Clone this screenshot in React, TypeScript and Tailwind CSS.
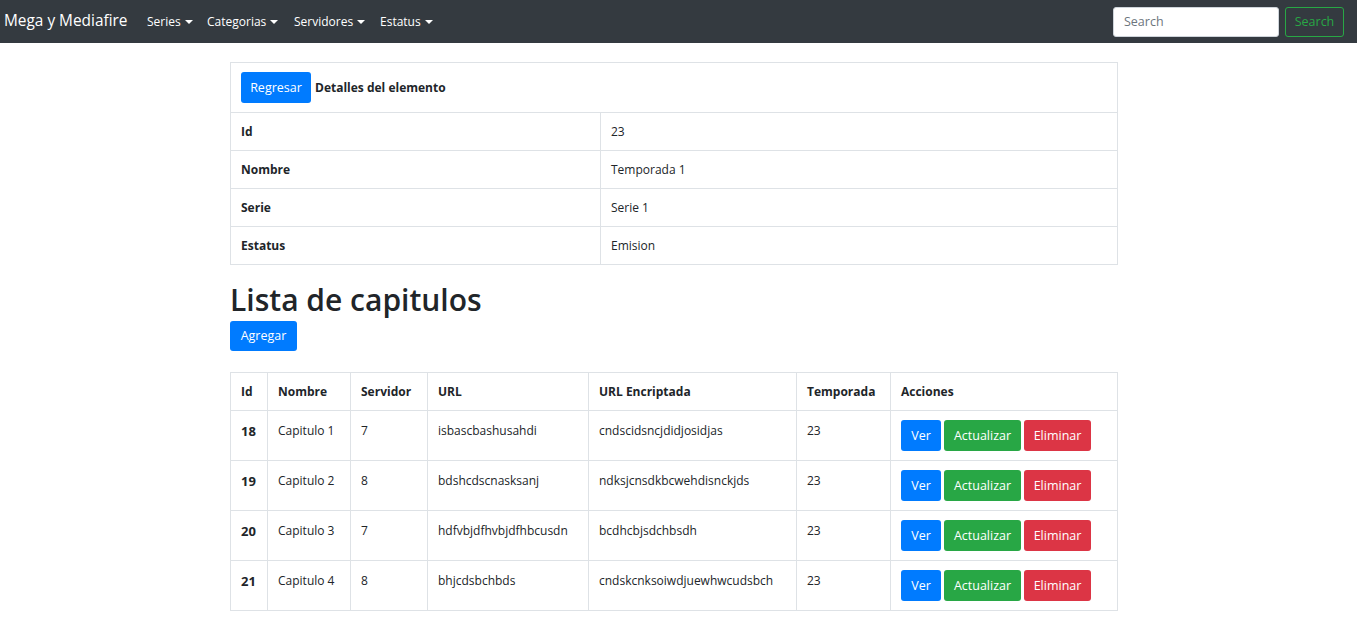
import React from "react";

const Caret = () => (
  <span className="ml-[4px] inline-block h-0 w-0 border-x-[4px] border-t-[4px] border-x-transparent border-t-white align-[2px]" />
);

const rows = [
  { id: 18, nombre: "Capitulo 1", serv: 7, url: "isbascbashusahdi", enc: "cndscidsncjdidjosidjas", temp: 23 },
  { id: 19, nombre: "Capitulo 2", serv: 8, url: "bdshcdscnasksanj", enc: "ndksjcnsdkbcwehdisnckjds", temp: 23 },
  { id: 20, nombre: "Capitulo 3", serv: 7, url: "hdfvbjdfhvbjdfhbcusdn", enc: "bcdhcbjsdchbsdh", temp: 23 },
  { id: 21, nombre: "Capitulo 4", serv: 8, url: "bhjcdsbchbds", enc: "cndskcnksoiwdjuewhwcudsbch", temp: 23 },
];

export default function App() {
  const font = { fontFamily: '"Segoe UI", "Open Sans", "Noto Sans", sans-serif' };
  return (
    <div className="min-h-[630px] bg-white text-[12px] leading-[1.6] text-[#212529]" style={font}>
      <nav className="flex h-[43px] items-center justify-between bg-[#343a40] pl-[4px] pr-[13px]">
        <div className="flex items-center">
          <span className="w-[143px] text-[15.4px] text-white">Mega y Mediafire</span>
          <div className="flex items-center text-white">
            <span className="w-[60px]">Series<Caret /></span>
            <span className="w-[87px]">Categorias<Caret /></span>
            <span className="w-[86px]">Servidores<Caret /></span>
            <span>Estatus<Caret /></span>
          </div>
        </div>
        <div className="flex items-center gap-[6px]">
          <div className="flex h-[30px] w-[166px] items-center rounded-[3px] border border-[#ced4da] bg-white px-[10px] text-[12.5px] text-[#6c757d]">Search</div>
          <div className="flex h-[30px] w-[59px] items-center justify-center rounded-[3px] border border-[#28a745] text-[12.5px] text-[#28a745]">Search</div>
        </div>
      </nav>

      <div className="ml-[230px] w-[888px] pt-[19px]">
        <table className="w-full border border-[#dee2e6]">
          <tbody>
            <tr className="h-[50px] border-b border-[#dee2e6]">
              <td colSpan={2} className="px-[10px]">
                <div className="flex items-center">
                  <span className="inline-flex h-[31px] w-[70px] items-center justify-center rounded-[3px] bg-[#007bff] text-[12.5px] text-white">Regresar</span>
                  <span className="ml-[4px] font-bold">Detalles del elemento</span>
                </div>
              </td>
            </tr>
            {[["Id", "23"], ["Nombre", "Temporada 1"], ["Serie", "Serie 1"], ["Estatus", "Emision"]].map(([k, v]) => (
              <tr key={k} className="h-[38px] border-b border-[#dee2e6]">
                <td className="w-[370px] border-r border-[#dee2e6] px-[10px] font-bold">{k}</td>
                <td className="px-[10px]">{v}</td>
              </tr>
            ))}
          </tbody>
        </table>

        <h1 className="mt-[16px] h-[37px] text-[30px] font-semibold leading-[37px]">Lista de capitulos</h1>
        <div className="mt-[3px]">
          <span className="inline-flex h-[30px] w-[67px] items-center justify-center rounded-[3px] bg-[#007bff] text-[12.5px] text-white">Agregar</span>
        </div>

        <table className="mt-[21px] w-full border border-[#dee2e6]">
          <thead>
            <tr className="h-[38px] border-b border-[#dee2e6] text-left font-bold">
              <th className="w-[37px] border-r border-[#dee2e6] px-[10px]">Id</th>
              <th className="w-[83px] border-r border-[#dee2e6] px-[10px]">Nombre</th>
              <th className="w-[77px] border-r border-[#dee2e6] px-[10px]">Servidor</th>
              <th className="w-[161px] border-r border-[#dee2e6] px-[10px]">URL</th>
              <th className="w-[208px] border-r border-[#dee2e6] px-[10px]">URL Encriptada</th>
              <th className="w-[94px] border-r border-[#dee2e6] px-[10px]">Temporada</th>
              <th className="px-[10px]">Acciones</th>
            </tr>
          </thead>
          <tbody>
            {rows.map((r) => (
              <tr key={r.id} className="h-[50px] border-b border-[#dee2e6] align-top">
                <th className="border-r border-[#dee2e6] px-[10px] pt-[10px] text-left text-[13px] font-bold">{r.id}</th>
                <td className="border-r border-[#dee2e6] px-[10px] pt-[10px]">{r.nombre}</td>
                <td className="border-r border-[#dee2e6] px-[10px] pt-[10px]">{r.serv}</td>
                <td className="border-r border-[#dee2e6] px-[10px] pt-[10px]">{r.url}</td>
                <td className="border-r border-[#dee2e6] px-[10px] pt-[10px]">{r.enc}</td>
                <td className="border-r border-[#dee2e6] px-[10px] pt-[10px]">{r.temp}</td>
                <td className="px-[10px] py-[9px]">
                  <div className="flex gap-[3px] text-[12.5px]">
                    <span className="inline-flex h-[31px] w-[40px] items-center justify-center rounded-[3px] bg-[#007bff] text-white">Ver</span>
                    <span className="inline-flex h-[31px] w-[77px] items-center justify-center rounded-[3px] bg-[#28a745] text-white">Actualizar</span>
                    <span className="inline-flex h-[31px] w-[67px] items-center justify-center rounded-[3px] bg-[#dc3545] text-white">Eliminar</span>
                  </div>
                </td>
              </tr>
            ))}
          </tbody>
        </table>
      </div>
    </div>
  );
}
